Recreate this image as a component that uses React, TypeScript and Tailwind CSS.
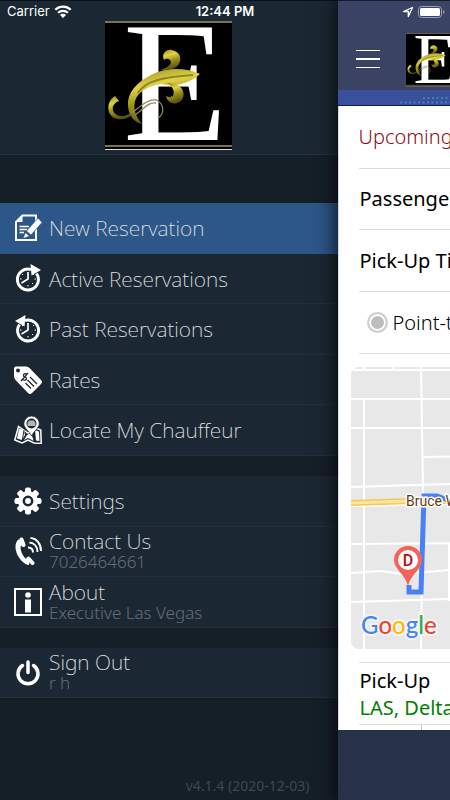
import type { ReactNode } from 'react'

function Logo({ className, id }: { className: string; id: string }) {
  return (
    <svg viewBox="0 0 127 129" className={className} role="img" aria-label="Executive Las Vegas">
      <defs>
        <linearGradient id={id} x1="0" y1="0" x2="0.3" y2="1">
          <stop offset="0" stopColor="#8f861b" />
          <stop offset="0.35" stopColor="#e0d246" />
          <stop offset="0.6" stopColor="#a3981a" />
          <stop offset="1" stopColor="#5c5410" />
        </linearGradient>
      </defs>
      <rect width="127" height="129" fill="#000" />
      <rect width="127" height="2" fill="#77754f" />
      <rect y="124" width="127" height="2" fill="#77754f" />
      <rect y="128" width="127" height="1" fill="#dedede" />
      <text x="18" y="119" fontSize="171" fontFamily="'Liberation Serif', serif" fill="#fff">
        E
      </text>
      <g fill={`url(#${id})`}>
        <path d="M95 53C82 47 62 46 48 53C31 61 22 72 23 85C24 95 29 101 37 103C31 96 28 88 30 80C33 71 42 65 56 63C72 67 86 61 95 53Z" />
        <path d="M55 49C62 47 66 44 66 41C65 37 61 37 59 39C56 33 61 28 67 29C75 31 77 37 74 43C71 48 65 49 55 49Z" />
        <path d="M62 62C68 66 70 70 68 75C66 77 63 76 61 75C62 80 67 84 72 82C79 80 80 73 77 68C74 64 70 62 62 62Z" />
        <path d="M10 75L14 80C10 81 7 85 8 89C10 96 19 97 26 92L27 94C18 101 7 99 4 91C2 84 5 78 10 75Z" />
      </g>
      <path d="M33 72C40 60 58 56 88 54" fill="none" stroke="#5f5810" strokeWidth="2" opacity="0.6" />
      <path d="M25 93C35 86 42 78 51 79C59 82 60 93 53 97M30 94C39 88 43 81 51 82" fill="none" stroke="#8b885a" strokeWidth="1.3" />
    </svg>
  )
}

function NewIcon() {
  return (
    <svg viewBox="0 0 28 28" className="size-7" aria-hidden="true">
      <path d="M8.500 1.500H22V26H2V8Z" fill="none" stroke="#fff" strokeWidth="2" />
      <path d="M2 8L8.500 2V8Z" fill="#fff" />
      <path d="M5.500 12.500H15M5.500 15.500H13M5.500 18.500H10" stroke="#fff" strokeWidth="1.500" />
      <path d="M24 4L28 8.500L17 21L12.500 17Z" fill="#fff" stroke="#2d5789" strokeWidth="0.700" />
      <path d="M11.500 19L9.500 24L15 22Z" fill="#fff" />
    </svg>
  )
}

function ClockIcon({ past = false }: { past?: boolean }) {
  return (
    <svg viewBox="0 0 28 28" className="size-7" aria-hidden="true">
      <g transform={past ? 'matrix(-1 0 0 1 28 0)' : undefined} fill="none" stroke="#fff">
        <path d="M22.500 9.500A10.500 10.500 0 1 1 17 5.500" strokeWidth="3" />
        <path d="M16.500 0L27 6L17.500 11.500Z" fill="#fff" stroke="none" />
      </g>
      <g stroke="#fff" fill="none">
        <path d="M14 8V15L7.500 19" strokeWidth="1.700" />
        <path d="M8 10L9 11M6 15H7.500M14 22.500V21M20 10L19 11M22 15H20.500M19 20L18 19" strokeWidth="1" />
      </g>
    </svg>
  )
}

function RatesIcon() {
  return (
    <svg viewBox="0 0 28 28" className="size-7" aria-hidden="true">
      <path d="M2 0.500H12Q14 0.500 15.500 2L27 14Q29 16 27 18L18 27Q16 29 14 27L1.500 14Q0 12 0 10V2.500Q0 0.500 2 0.500Z" fill="#fff" />
      <circle cx="4" cy="4.500" r="2" fill="#1b2834" />
      <path d="M13 8C11 7 9 8 9.500 10C10 11.500 13 11 12.500 13C12 14.500 9 14.500 8 13M14 7L7 15M16 11L23 18M13.500 14L20 20.500M11.500 17L17 22.500" fill="none" stroke="#1b2834" strokeWidth="1.300" />
    </svg>
  )
}

function LocateIcon() {
  return (
    <svg viewBox="0 0 28 28" className="size-7" aria-hidden="true">
      <path d="M4.500 10.500L0.800 24L8 27L14 24L20 27L27.200 27.500L26.800 14L22 12L14 17Z" fill="#1b2834" stroke="#fff" strokeWidth="1.500" />
      <path d="M5 12.500L10 14.500L11 19L8 24L3 22.500ZM13 19L19 16L18 20L20 25L14 22L10 24ZM21 14L25 15.500L25.500 25L22 24.500Z" fill="#fff" />
      <path d="M10 14L8 26M20 16V26" stroke="#1b2834" strokeWidth="1" />
      <path d="M17.500 0A7.800 7.800 0 0 0 9.800 8C10 12 15 15 17.500 20C20 15 25 12 25.300 8A7.800 7.800 0 0 0 17.500 0Z" fill="#fff" stroke="#1b2834" strokeWidth="0.800" />
      <circle cx="17.500" cy="7.500" r="5" fill="#1b2834" />
      <path d="M13.500 7L15 4.500H20L21.500 7V10H13.500Z" fill="#b5b5b5" />
    </svg>
  )
}

function SettingsIcon() {
  return (
    <svg viewBox="0 0 28 28" className="size-7" aria-hidden="true">
      <g fill="#fff">
        <rect x="11" y="0.500" width="6" height="27" rx="2" />
        <rect x="11" y="0.500" width="6" height="27" rx="2" transform="rotate(45 14 14)" />
        <rect x="11" y="0.500" width="6" height="27" rx="2" transform="rotate(90 14 14)" />
        <rect x="11" y="0.500" width="6" height="27" rx="2" transform="rotate(135 14 14)" />
        <circle cx="14" cy="14" r="10" />
      </g>
      <circle cx="14" cy="14" r="4.200" fill="#fff" stroke="#1b2834" strokeWidth="2.500" />
    </svg>
  )
}

function PhoneIcon() {
  return (
    <svg viewBox="0 0 28 28" className="size-7" aria-hidden="true">
      <path d="M5 2C-1 6 1 18 9 25C11 27 13 28 15 28L16 20.500C14 22 12 22 11 21C8 18 7 14 6.500 11C6.500 9 7 9 9 8Z" fill="#fff" />
      <path d="M7.500 2.500L9.500 8M14.500 21.500L18.500 26" stroke="#fff" strokeWidth="4" strokeLinecap="round" />
      <path d="M14 10.500C17 10.500 19 12 19 15.500M15.500 5.500C20 6 23.500 9.500 23.500 15M16.500 1C23 1.500 27 7 27 14" fill="none" stroke="#fff" strokeWidth="2" />
    </svg>
  )
}

function AboutIcon() {
  return (
    <svg viewBox="0 0 28 28" className="size-7" aria-hidden="true">
      <rect x="1" y="1" width="26" height="26" fill="none" stroke="#fff" strokeWidth="2" />
      <circle cx="14" cy="7" r="2.800" fill="#fff" />
      <path d="M11 11.500H17V24.500H11Z" fill="#fff" />
    </svg>
  )
}

function PowerIcon() {
  return (
    <svg viewBox="0 0 28 28" className="size-7" aria-hidden="true">
      <path d="M8.500 6.500A10 10 0 1 0 19.500 6.500M14 3V13.500" fill="none" stroke="#fff" strokeWidth="3.500" strokeLinecap="round" />
    </svg>
  )
}

type ItemProps = { icon: ReactNode; label: string; detail?: string; active?: boolean }

function MenuItem({ icon, label, detail, active }: ItemProps) {
  return (
    <li className={`border-b ${active ? 'border-[#2d5789] bg-[#2d5789]' : 'border-[#22303c] bg-[#1b2834]'}`}>
      <button className="flex h-full w-full items-center gap-[7px] pl-[14px] text-left">
        {icon}
        <span className={`flex flex-col ${detail ? 'pb-0.5' : 'pt-0.5'}`}>
          <span className={`text-[21px] font-extralight text-[#e3e5e7] ${detail ? 'leading-[22px]' : ''}`}>{label}</span>
          {detail && <span className="text-[17px] leading-[19px] font-light text-[#656d74]">{detail}</span>}
        </span>
      </button>
    </li>
  )
}

function StatusBar() {
  return (
    <div className="absolute inset-x-0 top-0 z-20 grid h-[22px] grid-cols-3 items-center border-t border-black/60 px-[7px] font-['Inter',sans-serif] text-[13px] text-white">
      <div className="flex items-center gap-1">
        <span>Carrier</span>
        <svg viewBox="0 0 18 13" className="h-[13px] w-[18px]" aria-label="Wi-Fi">
          <path d="M1.300 4.800A11 11 0 0 1 16.700 4.800M4.100 7.800A7 7 0 0 1 13.900 7.800" fill="none" stroke="#fff" strokeWidth="2.300" />
          <path d="M9 13L6 10A4.200 4.200 0 0 1 12 10Z" fill="#fff" />
        </svg>
      </div>
      <span className="text-center font-semibold">12:44 PM</span>
      <div className="flex items-center justify-end gap-1">
        <svg viewBox="0 0 12 12" className="size-3" aria-label="Location">
          <path d="M10.500 1.500L1.500 5.500H6.300V10.500Z" fill="none" stroke="#fff" strokeWidth="1.300" strokeLinejoin="round" />
        </svg>
        <svg viewBox="0 0 27 12" className="-mr-0.5 h-3 w-[27px]" aria-label="Battery">
          <rect x="0.500" y="0.500" width="23" height="11" rx="3" fill="none" stroke="#9aa0b5" />
          <rect x="2" y="2" width="20" height="8" rx="1.500" fill="#fff" />
          <path d="M25 4V8Q26.500 7.500 26.500 6T25 4Z" fill="#9aa0b5" />
        </svg>
      </div>
    </div>
  )
}

function RouteMap() {
  return (
    <div className="ml-3 h-[282px] w-[300px] overflow-hidden rounded-lg bg-[#e8e8e8]">
      <svg viewBox="0 0 300 282" className="h-full w-full" role="img" aria-label="Route map">
        <g fill="none" stroke="#fff" strokeWidth="2">
          <path d="M0 3H300M0 32H300M0 61H300M0 120L99 117H300M0 139L99 137M72 90L300 85M0 177L300 175M0 206L30 204L50 207L99 203L300 202M0 235L99 232L300 231" />
          <path d="M13 32V282M13 0V3M42 0V3M70 0L72 120L70 282M98 177V234" />
        </g>
        <path d="M0 136L60 134H300" fill="none" stroke="#f1c75f" strokeWidth="6" />
        <path d="M0 136L60 134H300" fill="none" stroke="#fbe59b" strokeWidth="3" />
        <path d="M99 134L86 129H73L70 225H58V218" fill="none" stroke="#4a80f5" strokeWidth="5" />
        <text x="55" y="139" fontSize="14" fontFamily="Roboto, sans-serif" fill="#6b3810" stroke="#fff" strokeWidth="3" paintOrder="stroke">
          Bruce Woodbury Beltway
        </text>
        <path d="M57 219C54 207 43 202 43 193A14 14 0 0 1 71 193C71 202 60 207 57 219Z" fill="#f2635a" />
        <circle cx="57" cy="193" r="10" fill="#fff" />
        <text x="57" y="199" fontSize="16" fontWeight="500" textAnchor="middle" fontFamily="Roboto, sans-serif" fill="#b80d0d">
          D
        </text>
        <text x="10" y="267" fontSize="24" fontWeight="500" fontFamily="Lato, sans-serif" stroke="#f4f4f4" strokeWidth="4" paintOrder="stroke">
          <tspan fill="#4285f4">G</tspan>
          <tspan fill="#ea4335">o</tspan>
          <tspan fill="#fbbc05">o</tspan>
          <tspan fill="#4285f4">g</tspan>
          <tspan fill="#34a853">l</tspan>
          <tspan fill="#ea4335">e</tspan>
        </text>
      </svg>
    </div>
  )
}

function Dots() {
  return (
    <svg viewBox="0 0 54 16" className="ml-auto h-4 w-[54px]" aria-hidden="true">
      <path d="M27 8H54M4 12.500H54" stroke="#4182b4" strokeWidth="2" strokeDasharray="2 2.500" />
    </svg>
  )
}

export default function App() {
  return (
    <div className="relative flex min-h-screen overflow-hidden bg-[#151f28] font-['Noto_Sans',sans-serif]">
      <StatusBar />

      <nav className="flex w-3/4 shrink-0 flex-col">
        <div className="flex h-[155px] justify-center border-b border-[#25333f] bg-[#1b2834] pt-[21px]">
          <Logo id="menuGold" className="h-[129px] w-[127px]" />
        </div>
        <ul className="mt-12 grid h-[253px] grid-rows-5">
          <MenuItem icon={<NewIcon />} label="New Reservation" active />
          <MenuItem icon={<ClockIcon />} label="Active Reservations" />
          <MenuItem icon={<ClockIcon past />} label="Past Reservations" />
          <MenuItem icon={<RatesIcon />} label="Rates" />
          <MenuItem icon={<LocateIcon />} label="Locate My Chauffeur" />
        </ul>
        <ul className="mt-5 grid h-[152px] grid-rows-3">
          <MenuItem icon={<SettingsIcon />} label="Settings" />
          <MenuItem icon={<PhoneIcon />} label="Contact Us" detail="7026464661" />
          <MenuItem icon={<AboutIcon />} label="About" detail="Executive Las Vegas" />
        </ul>
        <ul className="mt-5 grid h-[50px]">
          <MenuItem icon={<PowerIcon />} label="Sign Out" detail="r h" />
        </ul>
        <p className="mt-auto pr-7 pb-1 text-right text-sm text-[#3d4750]">v4.1.4 (2020-12-03)</p>
      </nav>

      <main className="z-10 flex min-w-0 flex-1 flex-col overflow-hidden bg-[#273248] whitespace-nowrap shadow-[0_0_20px_2px_rgba(0,0,0,0.8)]">
        <header className="flex h-[90px] items-start gap-[26px] bg-[#3a4364] pl-[18px] pt-[33px]">
          <button aria-label="Menu" className="mt-[17px] flex w-6 shrink-0 flex-col gap-[7px]">
            <span className="h-px w-full bg-white" />
            <span className="h-0.5 w-full bg-white" />
            <span className="h-px w-full bg-white" />
          </button>
          <Logo id="headerGold" className="h-[54px] w-[53px] shrink-0" />
        </header>
        <div className="h-4 border-b border-[#071a68] bg-[#3b509c]">
          <Dots />
        </div>

        <div className="border-l border-[#d5d8df] bg-white text-xl text-black">
          <h1 className="ml-5 flex h-[63px] items-center border-b border-[#dcdcdc] font-light text-[#8b0c14]">Upcoming</h1>
          <p className="ml-5 flex h-[61px] items-center border-b border-[#dcdcdc] pl-px">Passenger</p>
          <p className="ml-5 flex h-[62px] items-center border-b border-[#dcdcdc] pl-px">Pick-Up Time</p>
          <label className="ml-5 flex h-[62px] items-center gap-[5px] border-b border-[#dcdcdc] pl-2 font-light">
            <input type="radio" name="trip" className="size-[21px] shrink-0 appearance-none rounded-full border-2 border-[#cfcfcf] bg-[#bdbdbd] shadow-[inset_0_0_0_2px_white]" />
            Point-to-Point
          </label>
          <div className="pt-[13px]">
            <RouteMap />
          </div>
          <div className="mt-[13px] ml-5 flex h-[63px] flex-col justify-center border-y border-[#dcdcdc] pl-px leading-[27px]">
            <span>Pick-Up</span>
            <span className="text-[#008000]">LAS, Delta</span>
          </div>
          <div className="ml-5 h-[5px] w-[63px] border-r border-[#c4c4c4]" />
        </div>
      </main>
    </div>
  )
}
